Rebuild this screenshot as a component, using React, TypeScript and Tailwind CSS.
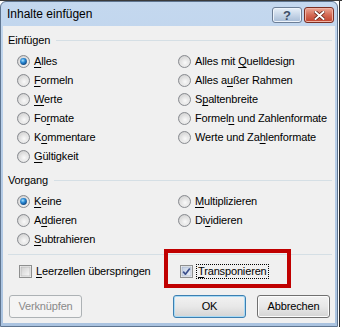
import type { ReactNode } from "react";

function Radio({ checked = false }: { checked?: boolean }) {
  return (
    <svg width="13" height="13" viewBox="0 0 13 13" className="shrink-0">
      <defs>
        <radialGradient id="radioFill" cx="0.55" cy="0.6" r="0.65">
          <stop offset="0" stopColor="#fafafa" />
          <stop offset="0.55" stopColor="#e2e2e2" />
          <stop offset="1" stopColor="#b9b9b9" />
        </radialGradient>
        <radialGradient id="radioDot" cx="0.4" cy="0.35" r="0.7">
          <stop offset="0" stopColor="#a8e4ff" />
          <stop offset="0.45" stopColor="#2a8ad6" />
          <stop offset="1" stopColor="#0d3f78" />
        </radialGradient>
      </defs>
      <circle cx="6.5" cy="6.5" r="6" fill="url(#radioFill)" stroke="#8a8d92" strokeWidth="1" />
      <circle cx="6.5" cy="6.5" r="4.6" fill="none" stroke="#f6f6f6" strokeWidth="0.6" opacity="0.7" />
      {checked && <circle cx="6.5" cy="6.5" r="3.4" fill="url(#radioDot)" />}
    </svg>
  );
}

function Check({ checked = false }: { checked?: boolean }) {
  return (
    <svg width="13" height="13" viewBox="0 0 13 13" className="shrink-0">
      <defs>
        <linearGradient id="checkFill" x1="0" y1="0" x2="1" y2="1">
          <stop offset="0" stopColor="#cfcfcf" />
          <stop offset="1" stopColor="#f8f8f8" />
        </linearGradient>
        <linearGradient id="checkFillOn" x1="0" y1="0" x2="1" y2="1">
          <stop offset="0" stopColor="#c0cde2" />
          <stop offset="1" stopColor="#eef2f8" />
        </linearGradient>
      </defs>
      <rect x="0.5" y="0.5" width="12" height="12" fill="#f4f4f4" stroke="#8e8f8f" />
      <rect x="2" y="2" width="9" height="9" fill={checked ? "url(#checkFillOn)" : "url(#checkFill)"} stroke={checked ? "#9aa9c4" : "#b0b0b0"} strokeWidth="0.6" />
      {checked && (
        <path d="M3.2 6.6 L5.4 9.2 L9.8 3.4" fill="none" stroke="#3b4f8c" strokeWidth="1.7" strokeLinejoin="round" />
      )}
    </svg>
  );
}

function Option({ children, checked }: { children: ReactNode; checked?: boolean }) {
  return (
    <div className="flex items-center h-[19px] gap-[4px] whitespace-nowrap">
      <Radio checked={checked} />
      <span>{children}</span>
    </div>
  );
}

function GroupLabel({ text }: { text: string }) {
  return (
    <div className="flex items-center h-[16px] mt-[6px] ml-[5px] mr-[3px]">
      <span>{text}</span>
      <div className="flex-1 h-px bg-[#d5dfe5] ml-[6px]" />
    </div>
  );
}

const U = ({ children }: { children: ReactNode }) => <span className="underline underline-offset-[2px]">{children}</span>;

export default function App() {
  return (
    <div className="relative w-[342px] h-[327px] overflow-hidden bg-white font-['Liberation_Sans',Arial,sans-serif] text-[11px] tracking-[-0.15px] text-black">
      <div className="absolute left-[339px] top-0 w-px h-full bg-[#2a2a2a]" />
      <div className="absolute left-0 top-0 w-full h-px bg-[#3a3a3a]" />

      <div className="relative mt-[1px] w-[338px] h-[326px] flex flex-col rounded-t-[6px] border border-[#5f7590] bg-gradient-to-b from-[#c4d8ef] to-[#aac3e0] px-[2px] pb-[3px]">
        {/* title bar */}
        <div className="flex items-center h-[24px] shrink-0">
          <span className="ml-[4px] text-[12px] tracking-normal text-black">Inhalte einfügen</span>
          <div className="ml-auto flex items-center gap-[2px] mr-[1px] mt-[2px]">
            <div className="w-[30px] h-[16px] rounded-[3px] border border-[#6c7e96] bg-gradient-to-b from-[#e8f0f8] via-[#c7d6e8] to-[#a6bbd5] shadow-[inset_0_0_0_1px_#eef4fb] flex items-center justify-center text-[13px] font-bold text-[#3e4f67] leading-none">
              ?
            </div>
            <div className="w-[30px] h-[16px] rounded-[3px] border border-[#7a2e22] bg-gradient-to-b from-[#eba796] via-[#d46a55] to-[#c0402a] shadow-[inset_0_0_0_1px_#f0b3a4] flex items-center justify-center">
              <svg width="11" height="9" viewBox="0 0 11 9">
                <path d="M1.5 1 L9.5 8 M9.5 1 L1.5 8" stroke="#5a1a10" strokeWidth="3.4" strokeLinecap="square" />
                <path d="M1.5 1 L9.5 8 M9.5 1 L1.5 8" stroke="#ffffff" strokeWidth="2" strokeLinecap="square" />
              </svg>
            </div>
          </div>
        </div>

        {/* content */}
        <div className="relative flex-1 bg-[#f0f0f0] flex flex-col">
          <GroupLabel text="Einfügen" />
          <div className="grid grid-cols-[161px_1fr] mt-[4px] ml-[14px]">
            <Option checked><U>A</U>lles</Option>
            <Option>Alles mit <U>Q</U>uelldesign</Option>
            <Option><U>F</U>ormeln</Option>
            <Option>Alles a<U>u</U>ßer Rahmen</Option>
            <Option><U>W</U>erte</Option>
            <Option>S<U>p</U>altenbreite</Option>
            <Option>Fo<U>r</U>mate</Option>
            <Option>Formel<U>n</U> und Zahlenformate</Option>
            <Option>K<U>o</U>mmentare</Option>
            <Option>Werte und Za<U>h</U>lenformate</Option>
            <Option><U>G</U>ültigkeit</Option>
          </div>

          <GroupLabel text="Vorgang" />
          <div className="grid grid-cols-[161px_1fr] mt-[4px] ml-[14px]">
            <Option checked><U>K</U>eine</Option>
            <Option><U>M</U>ultiplizieren</Option>
            <Option>A<U>d</U>dieren</Option>
            <Option>Di<U>v</U>idieren</Option>
            <Option><U>S</U>ubtrahieren</Option>
          </div>

          <div className="h-px bg-[#d5dfe5] mt-[5px] ml-[5px] mr-[3px]" />

          <div className="flex items-center h-[20px] mt-[6px] ml-[16px]">
            <div className="flex items-center gap-[4px] w-[161px]">
              <Check />
              <span><U>L</U>eerzellen überspringen</span>
            </div>
            <div className="flex items-center gap-[3px]">
              <Check checked />
              <span className="border border-dotted border-black px-[1px] leading-[13px]"><U>T</U>ransponieren</span>
            </div>
          </div>

          <div className="flex mt-[14px] ml-[6px]">
            <div className="w-[73px] h-[23px] rounded-[3px] border border-[#adb2b5] bg-[#f4f4f4] flex items-center justify-center text-[#8a8a8a]">
              Verknüpfen
            </div>
            <div className="ml-[91px] w-[73px] h-[23px] rounded-[3px] border border-[#3c7fb1] bg-gradient-to-b from-[#f2f2f2] via-[#e8e8e8] to-[#d4d4d4] shadow-[inset_0_0_0_1px_#a8daf5] flex items-center justify-center">
              OK
            </div>
            <div className="ml-[11px] w-[73px] h-[23px] rounded-[3px] border border-[#707070] bg-gradient-to-b from-[#f2f2f2] via-[#e8e8e8] to-[#d4d4d4] shadow-[inset_0_0_0_1px_#fcfcfc] flex items-center justify-center">
              Abbrechen
            </div>
          </div>

          {/* red annotation box */}
          <div className="absolute left-[161px] top-[223px] w-[127px] h-[39px] border-[4px] border-[#c00000]" />
        </div>
      </div>
    </div>
  );
}
